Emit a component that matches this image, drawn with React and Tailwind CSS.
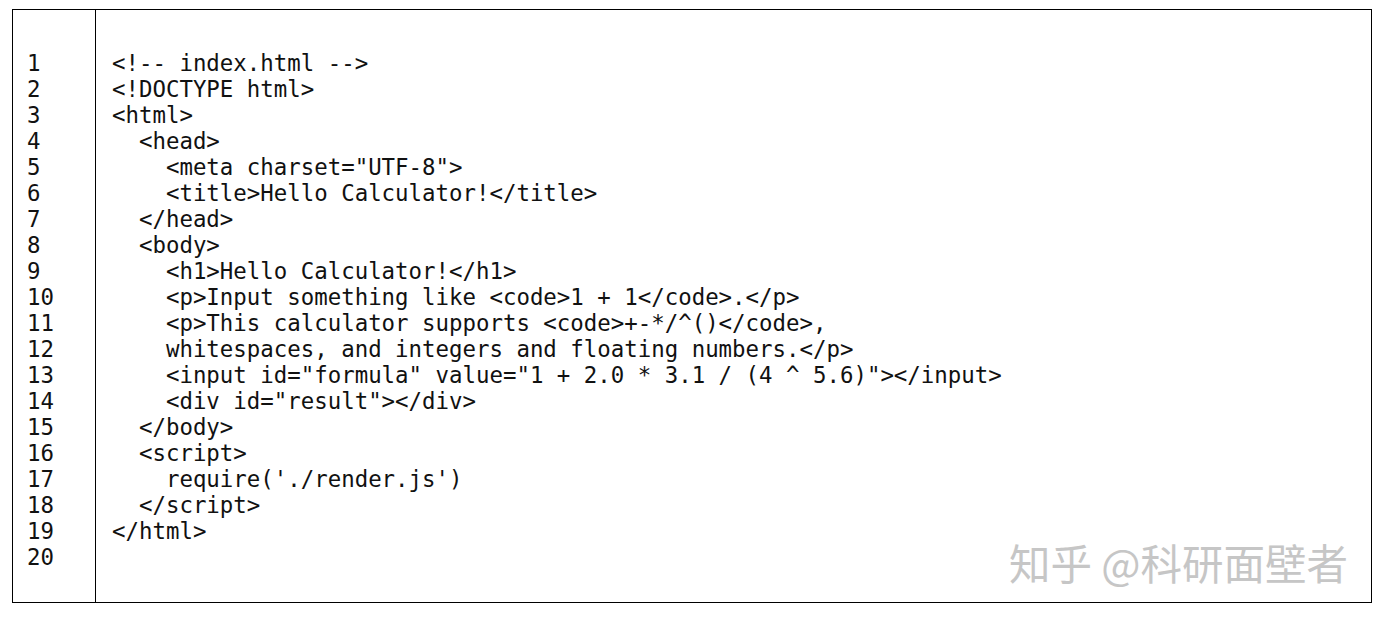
const lines = [
  '<!-- index.html -->',
  '<!DOCTYPE html>',
  '<html>',
  '  <head>',
  '    <meta charset="UTF-8">',
  '    <title>Hello Calculator!</title>',
  '  </head>',
  '  <body>',
  '    <h1>Hello Calculator!</h1>',
  '    <p>Input something like <code>1 + 1</code>.</p>',
  '    <p>This calculator supports <code>+-*/^()</code>,',
  '    whitespaces, and integers and floating numbers.</p>',
  '    <input id="formula" value="1 + 2.0 * 3.1 / (4 ^ 5.6)"></input>',
  '    <div id="result"></div>',
  '  </body>',
  '  <script>',
  "    require('./render.js')",
  '  </script>',
  '</html>',
  '',
];

export default function App() {
  return (
    <div className="w-[1384px] h-[622px] bg-white pt-[9px] pl-[12px] relative">
      {/* code listing table */}
      <div className="w-[1360px] h-[594px] border border-black flex text-[22.4px] leading-[26px] text-[#111] [font-family:'DejaVu_Sans_Mono',monospace]">
        <div className="w-[83px] border-r border-black pt-[40px] pl-[14px]">
          {lines.map((_, i) => (
            <div key={i}>{i + 1}</div>
          ))}
        </div>
        <div className="flex-1 pt-[40px] pl-[16px]">
          {lines.map((l, i) => (
            <div key={i} className="whitespace-pre h-[26px]">{l}</div>
          ))}
        </div>
      </div>

      {/* watermark */}
      <div className="absolute left-[1009px] top-[539px] text-[41.5px] leading-[46px] text-[#c6c6c6] [font-family:'Noto_Sans_CJK_SC',sans-serif] whitespace-pre">
        知乎 @科研面壁者
      </div>
    </div>
  );
}
